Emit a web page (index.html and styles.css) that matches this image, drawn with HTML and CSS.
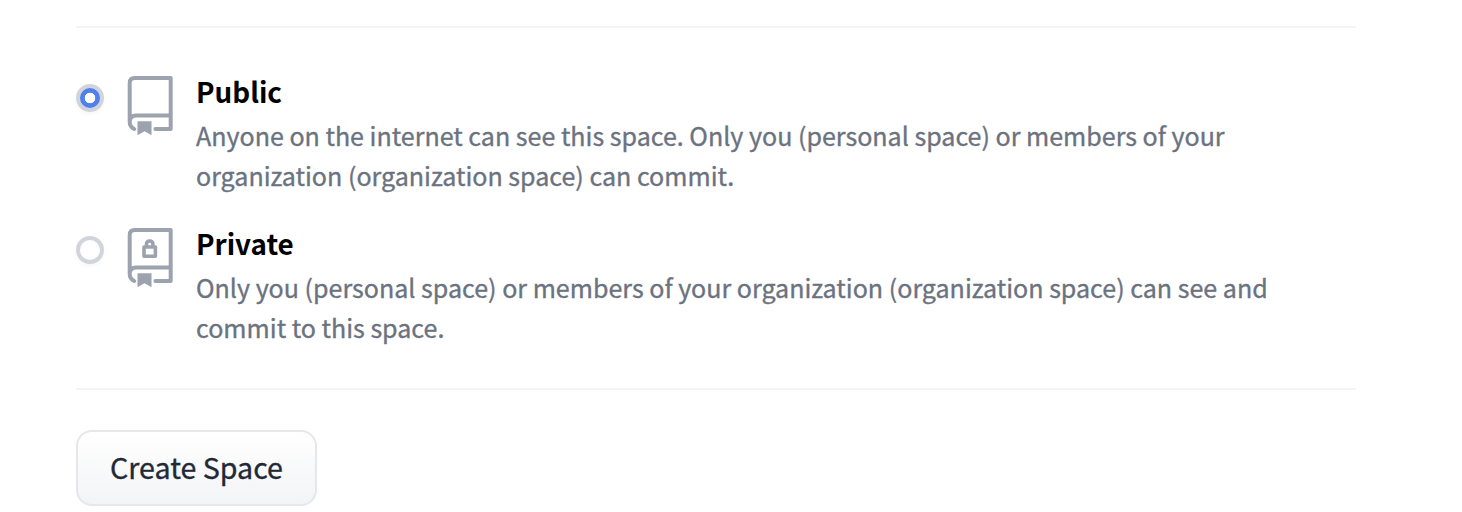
FILE: index.html
```html
<!DOCTYPE html>
<html lang="en">
<head>
<meta charset="utf-8">
<title>Create Space</title>
<link rel="stylesheet" href="styles.css">
</head>
<body>
<form class="form">
  <div class="options">
    <label class="option">
      <input class="radio" type="radio" name="visibility" checked>
      <svg class="icon" viewBox="0 0 48 62" fill="none" stroke="currentColor" stroke-width="4">
        <path d="M7.2 54C4.2 52.6 2.7 50.3 2.7 47V8Q2.7 3 7.7 3H43.7V54H28.4M2.7 47C2.7 43 4.7 40.4 9.2 40.4H43.7" stroke-linecap="round" stroke-linejoin="round"/>
        <path d="M10.5 46.2H24.5V60.2L17.5 56.2L10.5 60.2Z" fill="currentColor" stroke="none"/>
      </svg>
      <div class="copy">
        <div class="title">Public</div>
        <div class="description">Anyone on the internet can see this space. Only you (personal space) or members of your<br>organization (organization space) can commit.</div>
      </div>
    </label>
    <label class="option">
      <input class="radio" type="radio" name="visibility">
      <svg class="icon" viewBox="0 0 48 62" fill="none" stroke="currentColor" stroke-width="4">
        <path d="M7.2 54C4.2 52.6 2.7 50.3 2.7 47V8Q2.7 3 7.7 3H43.7V54H28.4M2.7 47C2.7 43 4.7 40.4 9.2 40.4H43.7" stroke-linecap="round" stroke-linejoin="round"/>
        <path d="M10.5 46.2H24.5V60.2L17.5 56.2L10.5 60.2Z" fill="currentColor" stroke="none"/>
        <path d="M17 20H28.4V29.2H17ZM19.5 20V17Q19.5 14 22.7 14T25.9 17V20" stroke-width="3.6" stroke-linejoin="round"/>
      </svg>
      <div class="copy">
        <div class="title">Private</div>
        <div class="description">Only you (personal space) or members of your organization (organization space) can see and<br>commit to this space.</div>
      </div>
    </label>
  </div>
  <button class="button" type="button">Create Space</button>
</form>
</body>
</html>
```

FILE: styles.css
```css
* { box-sizing: border-box; }
body {
  margin: 0;
  background: #fff;
  font-family: "Noto Sans CJK SC", "Noto Sans", sans-serif;
}
.form { width: 1280px; margin: 26px 0 0 76px; }
.options {
  display: flex;
  flex-direction: column;
  height: 364px;
  padding-top: 43px;
  border-top: 2px solid #f3f4f6;
  border-bottom: 2px solid #f3f4f6;
}
.option { display: flex; height: 152px; }
.radio {
  appearance: none;
  flex: none;
  width: 28px;
  height: 28px;
  margin: 13px 23px 0 0;
  border: 4px solid #d1d5db;
  border-radius: 50%;
  background: #fff;
  box-shadow: 0 2px 4px rgba(0, 0, 0, .04);
}
.radio:checked { background: radial-gradient(circle, #fff 5px, #4f80ed 5.6px); }
.icon { flex: none; width: 48px; height: 62px; margin-top: 4px; color: #9ca3af; }
.copy { margin-left: 21px; white-space: nowrap; }
.title { height: 44px; font-size: 27.8px; line-height: 40px; font-weight: 700; color: #000; }
.description {
  font-size: 25.06px;
  line-height: 40px;
  color: #6b7280;
  -webkit-text-stroke: .35px #6b7280;
}
.button {
  display: block;
  width: 241px;
  height: 76px;
  margin-top: 40px;
  padding: 0 0 3px;
  border: 2px solid #e5e7eb;
  border-radius: 16px;
  background: linear-gradient(#fff, #f3f4f6);
  color: #1f2937;
  font: 28.6px/40px "Noto Sans CJK SC", "Noto Sans", sans-serif;
  -webkit-text-stroke: .35px #1f2937;
}
```
